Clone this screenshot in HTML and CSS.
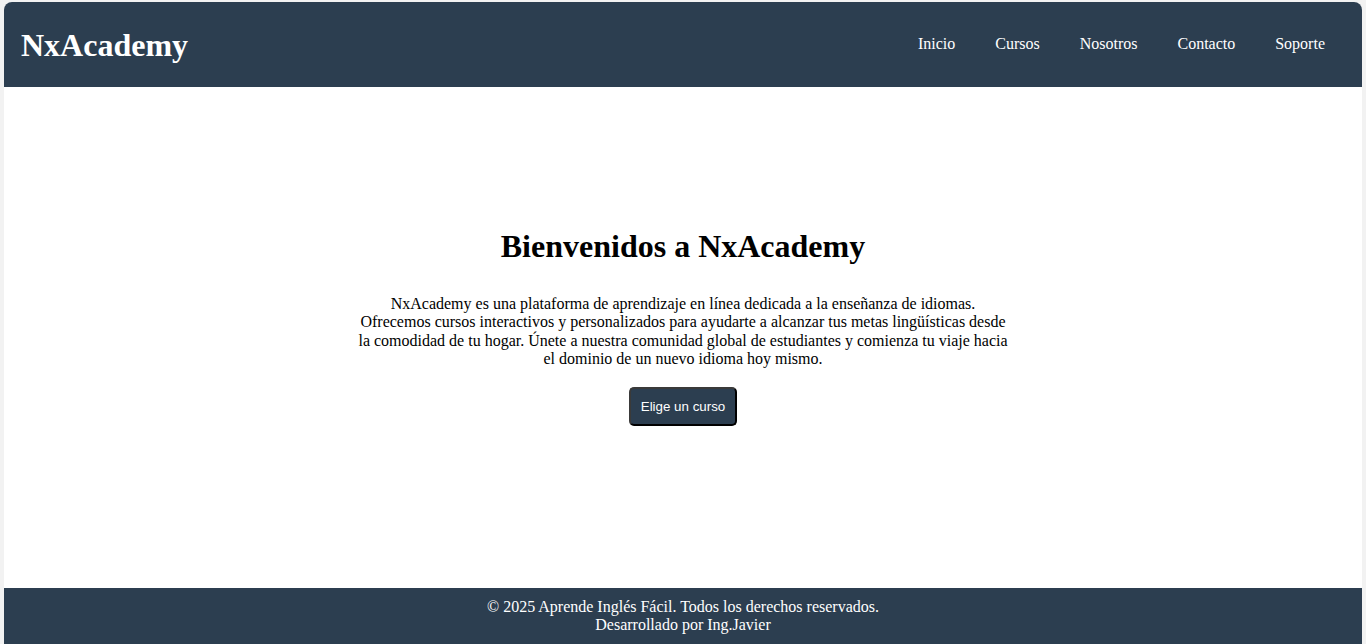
FILE: index.html
```html
<!DOCTYPE html>
<html lang="es">
<head>
<meta charset="utf-8">
<title>NxAcademy</title>
<link rel="stylesheet" href="styles.css">
</head>
<body>
<div class="page">
  <header class="site-header">
    <div class="logo">NxAcademy</div>
    <nav class="nav">
      <a href="#">Inicio</a>
      <a href="#">Cursos</a>
      <a href="#">Nosotros</a>
      <a href="#">Contacto</a>
      <a href="#">Soporte</a>
    </nav>
  </header>
  <main class="hero">
    <h1 class="hero-title">Bienvenidos a NxAcademy</h1>
    <p class="hero-text">NxAcademy es una plataforma de aprendizaje en línea dedicada a la enseñanza de idiomas. Ofrecemos cursos interactivos y personalizados para ayudarte a alcanzar tus metas lingüísticas desde la comodidad de tu hogar. Únete a nuestra comunidad global de estudiantes y comienza tu viaje hacia el dominio de un nuevo idioma hoy mismo.</p>
    <button class="hero-btn">Elige un curso</button>
  </main>
  <footer class="site-footer">
    <div>© 2025 Aprende Inglés Fácil. Todos los derechos reservados.</div>
    <div>Desarrollado por Ing.Javier</div>
  </footer>
</div>
</body>
</html>
```
FILE: styles.css
```css
html, body {
  margin: 0;
  padding: 0;
}
body {
  background: #f2f2f2;
  font-family: "Liberation Serif", "Times New Roman", serif;
  font-size: 16px;
  overflow: hidden;
}
.page {
  margin: 2px 4px 0;
  background: #ffffff;
  border-radius: 8px 8px 0 0;
  overflow: hidden;
}
.site-header {
  background: #2c3e50;
  height: 85px;
  display: flex;
  align-items: center;
  justify-content: space-between;
  padding: 0 37px 0 17px;
  color: #ffffff;
}
.logo {
  font-size: 32px;
  font-weight: bold;
  margin-top: 1px;
}
.nav {
  display: flex;
  gap: 40px;
  margin-top: -1px;
}
.nav a {
  color: #ffffff;
  text-decoration: none;
  font-size: 16px;
}
.hero {
  height: 501px;
  box-sizing: border-box;
  padding-top: 141px;
  display: flex;
  flex-direction: column;
  align-items: center;
  text-align: center;
}
.hero-title {
  font-size: 32px;
  font-weight: bold;
  margin: 0;
  line-height: 37px;
}
.hero-text {
  width: 650px;
  margin: 30px 0 0;
  line-height: 18.4px;
  color: #000;
}
.hero-btn {
  margin-top: 18px;
  background: #2c3e50;
  color: #ffffff;
  font-family: "Liberation Sans", Arial, sans-serif;
  font-size: 13.333px;
  padding: 10px;
  border: 2px outset #3a3a3a;
  border-radius: 5px;
  line-height: 15px;
  cursor: pointer;
}
.site-footer {
  background: #2c3e50;
  color: #ffffff;
  text-align: center;
  padding: 10px 0 20px;
  line-height: 18px;
}
```
